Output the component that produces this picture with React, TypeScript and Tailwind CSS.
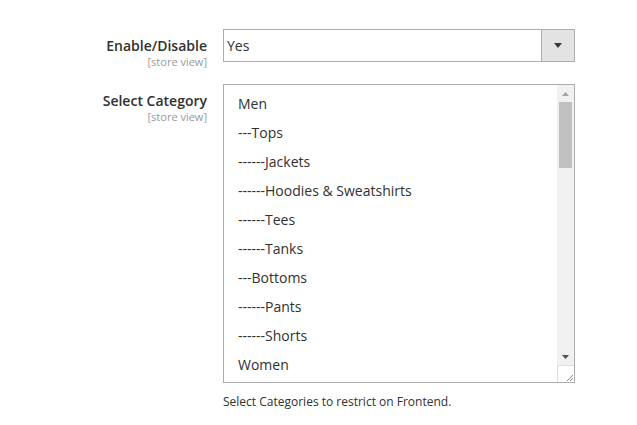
import React from "react";

const items = [
  "Men",
  "---Tops",
  "------Jackets",
  "------Hoodies & Sweatshirts",
  "------Tees",
  "------Tanks",
  "---Bottoms",
  "------Pants",
  "------Shorts",
  "Women",
];

export default function App() {
  return (
    <div
      className="w-[637px] h-[425px] bg-white text-[#303030] pt-[29px]"
      style={{ fontFamily: '"Open Sans", sans-serif' }}
    >
      <div className="flex">
        <div className="w-[208px] pr-[1px] text-right pt-[7px]">
          <div className="text-[14px] leading-[19px] font-semibold">Enable/Disable</div>
          <div className="text-[11px] leading-[13px] text-[#999]">[store view]</div>
        </div>
        <div className="ml-[15px] w-[352px] h-[33px] border border-[#adadad] flex">
          <div className="flex-1 pl-[3px] text-[14px] leading-[31px]">Yes</div>
          <div className="w-[33px] bg-[#e3e3e3] border-l border-[#adadad] flex items-center justify-center">
            <svg width="8" height="5" viewBox="0 0 8 5">
              <path d="M0 0 H8 L4 5 Z" fill="#41362f" />
            </svg>
          </div>
        </div>
      </div>

      <div className="flex mt-[16px]">
        <div className="w-[208px] pr-[1px] text-right pt-[7px]">
          <div className="text-[14px] leading-[19px] font-semibold">Select Category</div>
          <div className="text-[11px] leading-[13px] text-[#999]">[store view]</div>
        </div>
        <div className="ml-[15px] w-[352px]">
          <div className="h-[299px] border border-[#adadad] flex">
            <div className="flex-1 pt-[4px] pl-[14px]">
              {items.map((it) => (
                <div key={it} className="text-[14px] leading-[29px] h-[29px] whitespace-nowrap">
                  {it}
                </div>
              ))}
            </div>
            <div className="w-[17px] flex flex-col">
              <div className="flex-1 bg-[#f1f1f1] flex flex-col items-center">
                <div className="h-[17px] flex items-center justify-center">
                  <svg width="7" height="4" viewBox="0 0 7 4">
                    <path d="M0 4 H7 L3.5 0 Z" fill="#a3a3a3" />
                  </svg>
                </div>
                <div className="w-[13px] h-[66px] bg-[#c1c1c1]" />
                <div className="flex-1" />
                <div className="h-[17px] flex items-center justify-center">
                  <svg width="7" height="4" viewBox="0 0 7 4">
                    <path d="M0 0 H7 L3.5 4 Z" fill="#505050" />
                  </svg>
                </div>
              </div>
              <div className="h-[17px] bg-white border-t border-l border-[#dcdcdc] flex items-end justify-end">
                <svg width="10" height="10" viewBox="0 0 10 10">
                  <path d="M9 3 L3 9 M9 6 L6 9" stroke="#8a8a8a" strokeWidth="1" />
                </svg>
              </div>
            </div>
          </div>
          <div className="mt-[11px] text-[12px] leading-[16px]">
            Select Categories to restrict on Frontend.
          </div>
        </div>
      </div>
    </div>
  );
}
